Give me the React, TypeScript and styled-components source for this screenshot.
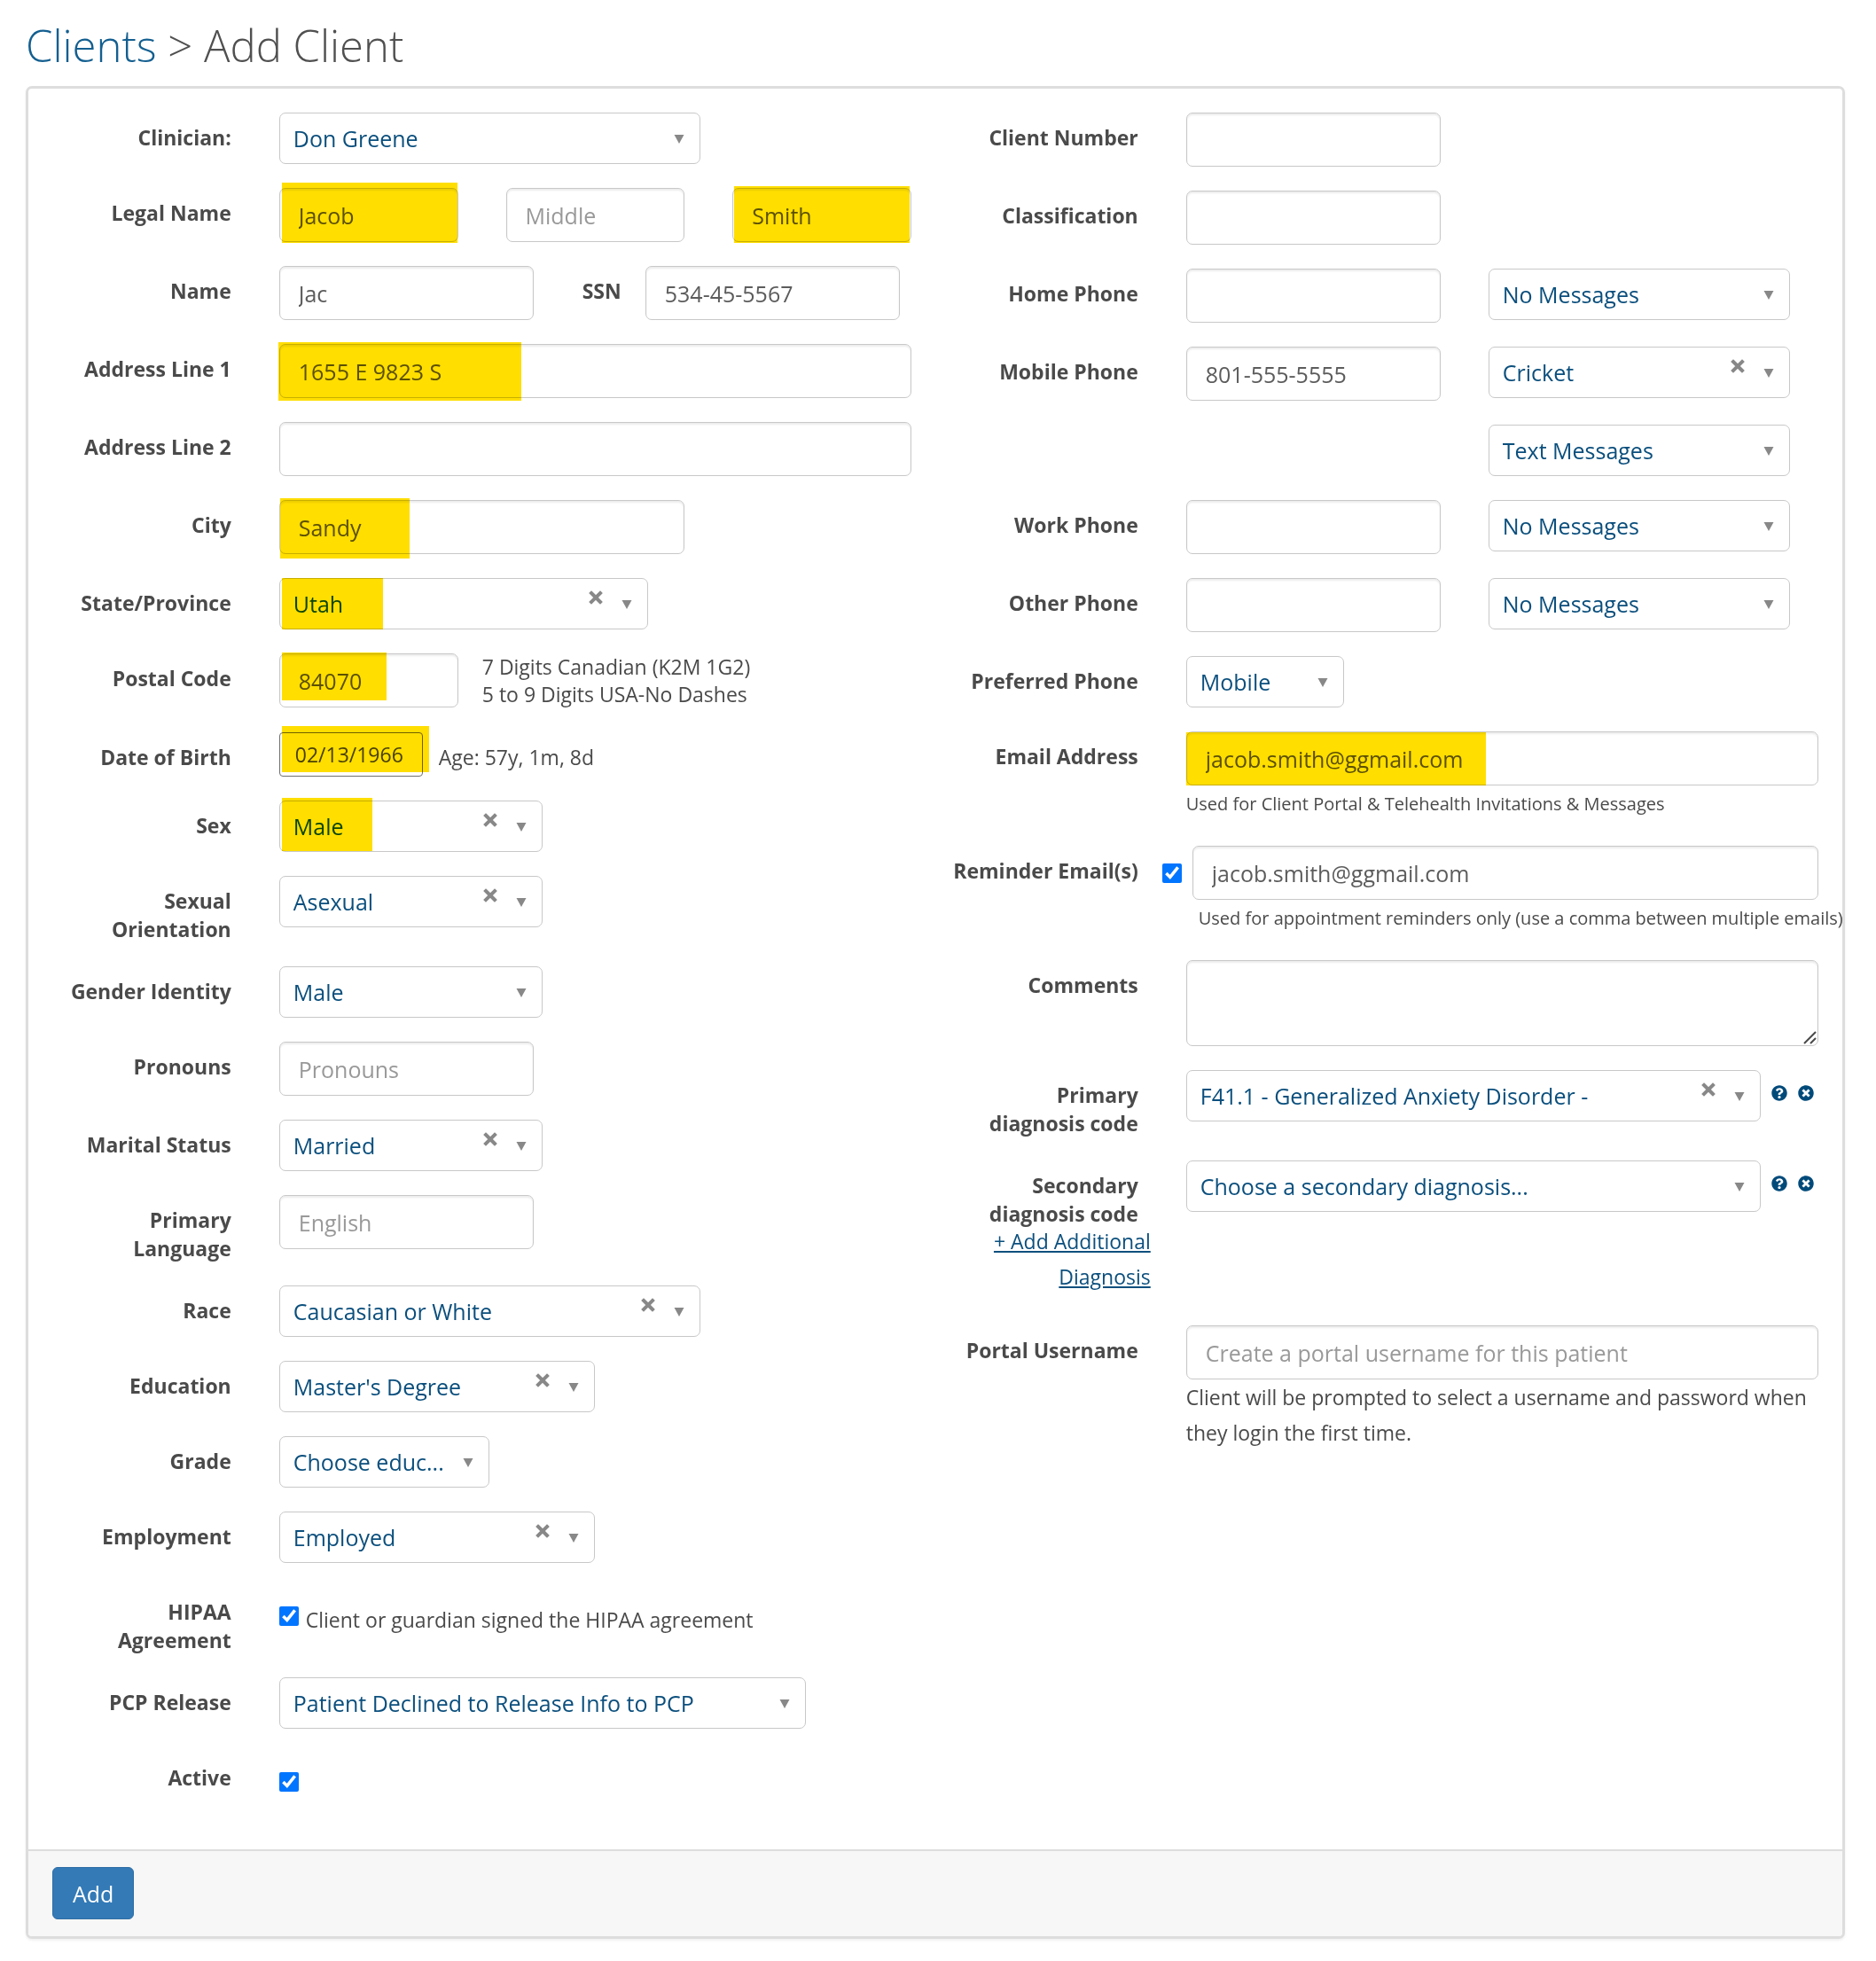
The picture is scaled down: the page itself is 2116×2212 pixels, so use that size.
import React, { useState } from 'react';
import styled, { createGlobalStyle, css } from 'styled-components';
import { FaQuestionCircle, FaTimesCircle } from 'react-icons/fa';

const GlobalStyle = createGlobalStyle`
  *, *::before, *::after { box-sizing: border-box; }
  body {
    margin: 0;
    background: #fff;
    color: #4a4a4a;
    font-family: "Open Sans", "Noto Sans", sans-serif;
    font-size: 23px;
    line-height: 40px;
  }
`;

const Page = styled.main`
  padding: 15px 35px 26px 29px;
`;

const Title = styled.h1`
  margin: 0 0 10px;
  font-size: 49px;
  line-height: 72px;
  font-weight: 300;
  color: #505050;
`;

const TitleLink = styled.a`
  color: #145f90;
  text-decoration: none;
`;

const Panel = styled.form`
  border: 3px solid #dddddd;
  border-radius: 7px;
  box-shadow: 0 2px 3px rgba(0, 0, 0, 0.06);
  background: #fff;
`;

const Columns = styled.div`
  display: grid;
  grid-template-columns: minmax(0, 1fr) minmax(0, 1fr);
  padding: 27px 0 24px;
`;

const Footer = styled.footer`
  border-top: 2px solid #dddddd;
  background: #f7f7f7;
  border-radius: 0 0 4px 4px;
  padding: 18px 27px 19px;
`;

const AddButton = styled.button`
  display: block;
  height: 59px;
  padding: 0 22px;
  border: 1px solid #2e6da4;
  border-radius: 6px;
  background: #337ab7;
  color: #fff;
  font: inherit;
  font-size: 25px;
`;

const Row = styled.div`
  display: grid;
  grid-template-columns: minmax(0, 1fr) minmax(0, 3fr);
  margin-bottom: 27px;
`;

const LabelCell = styled.div`
  padding-right: 27px;
  text-align: right;
`;

const Label = styled.label`
  display: block;
  padding-top: 12px;
  margin-bottom: -1px;
  line-height: 32px;
  font-weight: 700;
  white-space: pre-line;
`;

const Controls = styled.div`
  padding: 0 27px;
`;

const Line = styled.div<{ $gap?: number }>`
  display: flex;
  align-items: flex-start;
  gap: ${(p) => p.$gap ?? 54}px;
`;

const Stack = styled.div`
  display: flex;
  flex-direction: column;
  gap: 30px;
`;

const Field = styled.div<{ $width?: number; $grow?: boolean }>`
  position: relative;
  max-width: 100%;
  width: ${(p) => (p.$width ? `${p.$width}px` : '100%')};
  flex: ${(p) => (p.$grow ? '1 1 0' : '0 1 auto')};
  min-width: 0;
`;

const boxStyle = css`
  display: block;
  width: 100%;
  border: 1px solid #c8c8c8;
  border-radius: 7px;
  background: #fff;
  font-family: inherit;
  font-size: 25px;
`;

const TextInput = styled.input`
  ${boxStyle}
  height: 61px;
  padding: 0 21px;
  color: #5c5c5c;
  box-shadow: inset 0 2px 2px rgba(0, 0, 0, 0.075);
  &::placeholder { color: #999; opacity: 1; }
`;

const DateInput = styled.input`
  display: block;
  width: 100%;
  height: 50px;
  padding: 0 17px;
  border: 1px solid #6f6f6f;
  border-radius: 4px;
  color: #4a4a4a;
  font-family: inherit;
  font-size: 23px;
`;

const TextArea = styled.textarea`
  ${boxStyle}
  height: 97px;
  padding: 10px 21px;
  color: #5c5c5c;
  resize: vertical;
  box-shadow: inset 0 2px 2px rgba(0, 0, 0, 0.075);
  &::-webkit-resizer { background: transparent; }
`;

const Grip = styled.svg`
  position: absolute;
  right: 2px;
  bottom: 2px;
  width: 15px;
  height: 15px;
  stroke: #4a4a4a;
  stroke-width: 2;
  pointer-events: none;
`;

const SelectBox = styled.select`
  ${boxStyle}
  appearance: none;
  height: 58px;
  padding: 0 40px 0 15px;
  color: #0b4f7d;
  text-overflow: ellipsis;
`;

const Caret = styled.svg`
  position: absolute;
  right: 18px;
  top: 25px;
  width: 12px;
  height: 10px;
  fill: #888;
  pointer-events: none;
`;

const ClearButton = styled.button`
  position: absolute;
  right: 51px;
  top: 14px;
  width: 16px;
  height: 16px;
  padding: 0;
  border: 0;
  background: none;
  svg { display: block; stroke: #888; stroke-width: 4; stroke-linecap: square; }
`;

const Marker = styled.span<{ $x: number; $y: number; $w: number; $h: number }>`
  position: absolute;
  left: ${(p) => p.$x}px;
  top: ${(p) => p.$y}px;
  width: ${(p) => p.$w}px;
  height: ${(p) => p.$h}px;
  background: #ffde00;
  mix-blend-mode: multiply;
  pointer-events: none;
`;

const Checkbox = styled.input`
  flex: none;
  width: 22px;
  height: 22px;
  margin: 0;
  accent-color: #0075ff;
`;

const CheckLine = styled.div`
  display: flex;
  gap: 8px;
  min-height: 58px;
  padding-top: 17px;
  ${Checkbox} { margin-top: 5px; }
`;

const ReminderLine = styled.div`
  display: flex;
  align-items: center;
  gap: 12px;
  margin-left: -27px;
`;

const Hint = styled.p<{ $indent?: boolean }>`
  margin: 0;
  padding-left: ${(p) => (p.$indent ? 14 : 0)}px;
  font-size: 20px;
  line-height: 41px;
  white-space: nowrap;
`;

const PostalNote = styled.p`
  margin: 0;
  line-height: 31px;
`;

const AgeNote = styled.span`
  padding-top: 8px;
`;

const Note = styled.p`
  margin: 0;
`;

const AddLink = styled.a`
  display: block;
  margin: -5px -14px 8px 0;
  color: #0b4f7d;
  text-decoration: underline;
`;

const SideLabel = styled(Label)`
  width: 126px;
  padding-right: 27px;
  text-align: right;
`;

const IconGroup = styled.div`
  display: flex;
  gap: 12px;
  padding-top: 17px;
`;

const IconButton = styled.button`
  width: 18px;
  height: 18px;
  padding: 0;
  border: 0;
  background: none;
  color: #004a7a;
  font-size: 18px;
  svg { display: block; }
`;

type Mark = [number, number, number, number];

const MarkFor = ({ mark }: { mark?: Mark }) =>
  mark ? <Marker $x={mark[0]} $y={mark[1]} $w={mark[2]} $h={mark[3]} /> : null;

interface TextProps {
  id: string;
  width?: number;
  grow?: boolean;
  value?: string;
  placeholder?: string;
  name?: string;
  mark?: Mark;
}

function Text({ id, width, grow, value, placeholder, name, mark }: TextProps) {
  return (
    <Field $width={width} $grow={grow}>
      <TextInput id={id} defaultValue={value} placeholder={placeholder} aria-label={name} />
      <MarkFor mark={mark} />
    </Field>
  );
}

interface SelectProps {
  id: string;
  width?: number;
  value: string;
  clearable?: boolean;
  name?: string;
  mark?: Mark;
}

function Select({ id, width, value, clearable, name, mark }: SelectProps) {
  const [current, setCurrent] = useState(value);
  return (
    <Field $width={width}>
      <SelectBox id={id} value={current} aria-label={name} onChange={(e) => setCurrent(e.target.value)}>
        {clearable && <option value="" />}
        <option value={value}>{value}</option>
      </SelectBox>
      {clearable && (
        <ClearButton type="button" aria-label="Clear" onClick={() => setCurrent('')}>
          <svg width="16" height="16" viewBox="0 0 16 16">
            <path d="M3 3L13 13M13 3L3 13" />
          </svg>
        </ClearButton>
      )}
      <Caret viewBox="0 0 12 10">
        <path d="M0.500 0H11.500L6 10Z" />
      </Caret>
      <MarkFor mark={mark} />
    </Field>
  );
}

interface FormRowProps {
  id: string;
  label: string;
  below?: React.ReactNode;
  children: React.ReactNode;
}

function FormRow({ id, label, below, children }: FormRowProps) {
  return (
    <Row>
      <LabelCell>
        <Label htmlFor={id}>{label}</Label>
        {below}
      </LabelCell>
      <Controls>{children}</Controls>
    </Row>
  );
}

const DiagnosisIcons = () => (
  <IconGroup>
    <IconButton type="button" aria-label="Help"><FaQuestionCircle /></IconButton>
    <IconButton type="button" aria-label="Remove"><FaTimesCircle /></IconButton>
  </IconGroup>
);

const PhoneRow = ({ id, label }: { id: string; label: string }) => (
  <FormRow id={id} label={label}>
    <Line>
      <Text id={id} width={287} />
      <Select id={`${id}-messages`} width={340} value="No Messages" name={`${label} messages`} />
    </Line>
  </FormRow>
);

const LeftColumn = () => (
  <div>
    <FormRow id="clinician" label="Clinician:">
      <Select id="clinician" width={475} value="Don Greene" />
    </FormRow>
    <FormRow id="first" label="Legal Name">
      <Line>
        <Text id="first" grow value="Jacob" mark={[3, -6, 198, 68]} />
        <Text id="middle" grow placeholder="Middle" name="Middle name" />
        <Text id="last" grow value="Smith" name="Last name" mark={[2, -2, 198, 64]} />
      </Line>
    </FormRow>
    <FormRow id="name" label="Name">
      <Line $gap={0}>
        <Text id="name" width={287} value="Jac" />
        <SideLabel htmlFor="ssn">SSN</SideLabel>
        <Text id="ssn" width={287} value="534-45-5567" />
      </Line>
    </FormRow>
    <FormRow id="address1" label="Address Line 1">
      <Text id="address1" value="1655 E 9823 S" mark={[-1, -2, 274, 66]} />
    </FormRow>
    <FormRow id="address2" label="Address Line 2">
      <Text id="address2" />
    </FormRow>
    <FormRow id="city" label="City">
      <Text id="city" width={457} value="Sandy" mark={[1, -2, 146, 68]} />
    </FormRow>
    <FormRow id="state" label="State/Province">
      <Select id="state" width={416} value="Utah" clearable mark={[3, 0, 114, 58]} />
    </FormRow>
    <FormRow id="postal" label="Postal Code">
      <Line $gap={27}>
        <Text id="postal" width={202} value="84070" mark={[3, -1, 118, 54]} />
        <PostalNote>
          7 Digits Canadian (K2M 1G2)
          <br />5 to 9 Digits USA-No Dashes
        </PostalNote>
      </Line>
    </FormRow>
    <FormRow id="dob" label="Date of Birth">
      <Line $gap={18}>
        <Field $width={162}>
          <DateInput id="dob" defaultValue="02/13/1966" />
          <MarkFor mark={[3, -7, 166, 52]} />
        </Field>
        <AgeNote>Age: 57y, 1m, 8d</AgeNote>
      </Line>
    </FormRow>
    <FormRow id="sex" label="Sex">
      <Select id="sex" width={297} value="Male" clearable mark={[3, -3, 102, 60]} />
    </FormRow>
    <FormRow id="orientation" label={'Sexual\nOrientation'}>
      <Select id="orientation" width={297} value="Asexual" clearable />
    </FormRow>
    <FormRow id="gender" label="Gender Identity">
      <Select id="gender" width={297} value="Male" />
    </FormRow>
    <FormRow id="pronouns" label="Pronouns">
      <Text id="pronouns" width={287} placeholder="Pronouns" />
    </FormRow>
    <FormRow id="marital" label="Marital Status">
      <Select id="marital" width={297} value="Married" clearable />
    </FormRow>
    <FormRow id="language" label={'Primary\nLanguage'}>
      <Text id="language" width={287} placeholder="English" />
    </FormRow>
    <FormRow id="race" label="Race">
      <Select id="race" width={475} value="Caucasian or White" clearable />
    </FormRow>
    <FormRow id="education" label="Education">
      <Select id="education" width={356} value="Master's Degree" clearable />
    </FormRow>
    <FormRow id="grade" label="Grade">
      <Select id="grade" width={237} value="Choose educ..." />
    </FormRow>
    <FormRow id="employment" label="Employment">
      <Select id="employment" width={356} value="Employed" clearable />
    </FormRow>
    <FormRow id="hipaa" label={'HIPAA\nAgreement'}>
      <CheckLine>
        <Checkbox id="hipaa" type="checkbox" defaultChecked />
        <label htmlFor="hipaa">Client or guardian signed the HIPAA agreement</label>
      </CheckLine>
    </FormRow>
    <FormRow id="pcp" label="PCP Release">
      <Select id="pcp" width={594} value="Patient Declined to Release Info to PCP" />
    </FormRow>
    <FormRow id="active" label="Active">
      <CheckLine>
        <Checkbox id="active" type="checkbox" defaultChecked />
      </CheckLine>
    </FormRow>
  </div>
);

const RightColumn = () => (
  <div>
    <FormRow id="number" label="Client Number">
      <Text id="number" width={287} />
    </FormRow>
    <FormRow id="classification" label="Classification">
      <Text id="classification" width={287} />
    </FormRow>
    <PhoneRow id="home" label="Home Phone" />
    <FormRow id="mobile" label="Mobile Phone">
      <Line>
        <Text id="mobile" width={287} value="801-555-5555" />
        <Stack>
          <Select id="carrier" width={340} value="Cricket" clearable name="Mobile carrier" />
          <Select id="mobile-messages" width={340} value="Text Messages" name="Mobile messages" />
        </Stack>
      </Line>
    </FormRow>
    <PhoneRow id="work" label="Work Phone" />
    <PhoneRow id="other" label="Other Phone" />
    <FormRow id="preferred" label="Preferred Phone">
      <Select id="preferred" width={178} value="Mobile" />
    </FormRow>
    <FormRow id="email" label="Email Address">
      <Text id="email" value="jacob.smith@ggmail.com" mark={[0, 1, 338, 60]} />
      <Hint>Used for Client Portal &amp; Telehealth Invitations &amp; Messages</Hint>
    </FormRow>
    <FormRow id="reminder" label="Reminder Email(s)">
      <ReminderLine>
        <Checkbox type="checkbox" defaultChecked aria-label="Send reminder emails" />
        <Text id="reminder" grow value="jacob.smith@ggmail.com" />
      </ReminderLine>
      <Hint $indent>Used for appointment reminders only (use a comma between multiple emails)</Hint>
    </FormRow>
    <FormRow id="comments" label="Comments">
      <Field>
        <TextArea id="comments" />
        <Grip viewBox="0 0 15 15">
          <path d="M1 14L14 1M8 14L14 8" />
        </Grip>
      </Field>
    </FormRow>
    <FormRow id="primary" label={'Primary\ndiagnosis code'}>
      <Line $gap={12}>
        <Select id="primary" width={648} value="F41.1 - Generalized Anxiety Disorder -" clearable />
        <DiagnosisIcons />
      </Line>
    </FormRow>
    <FormRow
      id="secondary"
      label={'Secondary\ndiagnosis code'}
      below={<AddLink href="#add-diagnosis">+ Add Additional Diagnosis</AddLink>}
    >
      <Line $gap={12}>
        <Select id="secondary" width={648} value="Choose a secondary diagnosis..." />
        <DiagnosisIcons />
      </Line>
    </FormRow>
    <FormRow id="portal" label="Portal Username">
      <Text id="portal" placeholder="Create a portal username for this patient" />
      <Note>Client will be prompted to select a username and password when they login the first time.</Note>
    </FormRow>
  </div>
);

export default function App() {
  return (
    <>
      <GlobalStyle />
      <Page>
        <Title>
          <TitleLink href="#clients">Clients</TitleLink> &gt; Add Client
        </Title>
        <Panel onSubmit={(e) => e.preventDefault()}>
          <Columns>
            <LeftColumn />
            <RightColumn />
          </Columns>
          <Footer>
            <AddButton type="submit">Add</AddButton>
          </Footer>
        </Panel>
      </Page>
    </>
  );
}
